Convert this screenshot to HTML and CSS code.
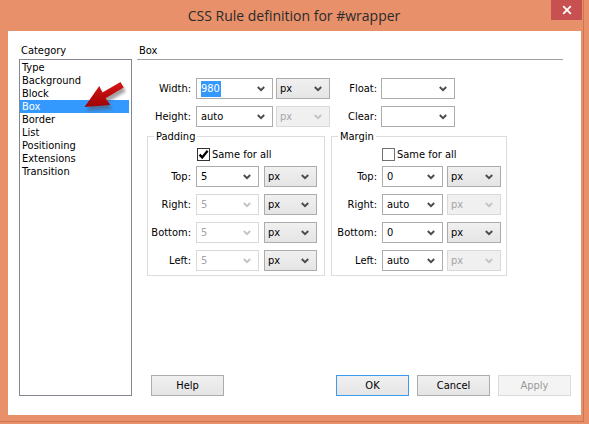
FILE: index.html
```html
<!DOCTYPE html>
<html>
<head>
<meta charset="utf-8">
<title>CSS Rule definition for #wrapper</title>
<link rel="stylesheet" href="styles.css">
</head>
<body>
<div class="window">
  <div class="titlebar">
    <div class="title">CSS Rule definition for #wrapper</div>
    <div class="close"><svg width="10" height="10" viewBox="0 0 10 10"><path d="M1.2 1.2L8.8 8.8M8.8 1.2L1.2 8.8" stroke="#fff" stroke-width="1.8"/></svg></div>
  </div>
  <div class="client">
    <div class="left">
      <div class="heading">Category</div>
      <ul class="catlist">
        <li>Type</li>
        <li>Background</li>
        <li>Block</li>
        <li class="sel">Box</li>
        <li>Border</li>
        <li>List</li>
        <li>Positioning</li>
        <li>Extensions</li>
        <li>Transition</li>
      </ul>
    </div>
    <div class="right">
      <div class="heading rule">Box</div>
      <div class="topgrid">
        <div class="row">
          <span class="lbl lbl-main">Width:</span>
          <div class="combo w77"><span class="val"><span class="hl">980</span></span><svg class="chev" viewBox="0 0 8 6"><path d="M0.8 1L4 4.2L7.2 1"/></svg></div>
          <div class="dd w54"><span class="val">px</span><svg class="chev" viewBox="0 0 8 6"><path d="M0.8 1L4 4.2L7.2 1"/></svg></div>
          <span class="lbl lbl-side">Float:</span>
          <div class="combo w74"><span class="val"></span><svg class="chev" viewBox="0 0 8 6"><path d="M0.8 1L4 4.2L7.2 1"/></svg></div>
        </div>
        <div class="row">
          <span class="lbl lbl-main">Height:</span>
          <div class="combo w77"><span class="val">auto</span><svg class="chev" viewBox="0 0 8 6"><path d="M0.8 1L4 4.2L7.2 1"/></svg></div>
          <div class="dd w54 off"><span class="val">px</span><svg class="chev" viewBox="0 0 8 6"><path d="M0.8 1L4 4.2L7.2 1"/></svg></div>
          <span class="lbl lbl-side">Clear:</span>
          <div class="combo w74"><span class="val"></span><svg class="chev" viewBox="0 0 8 6"><path d="M0.8 1L4 4.2L7.2 1"/></svg></div>
        </div>
      </div>
      <div class="groups">
        <fieldset class="grp pad">
          <legend>Padding</legend>
          <div class="chk"><span class="box on"><svg viewBox="0 0 11 11"><path d="M1.6 5.6L4.2 8.4L9.6 1.8"/></svg></span>Same for all</div>
          <div class="row"><span class="lbl">Top:</span><div class="combo cv"><span class="val">5</span><svg class="chev" viewBox="0 0 8 6"><path d="M0.8 1L4 4.2L7.2 1"/></svg></div><div class="dd cu"><span class="val">px</span><svg class="chev" viewBox="0 0 8 6"><path d="M0.8 1L4 4.2L7.2 1"/></svg></div></div>
          <div class="row"><span class="lbl">Right:</span><div class="combo cv off"><span class="val">5</span><svg class="chev" viewBox="0 0 8 6"><path d="M0.8 1L4 4.2L7.2 1"/></svg></div><div class="dd cu"><span class="val">px</span><svg class="chev" viewBox="0 0 8 6"><path d="M0.8 1L4 4.2L7.2 1"/></svg></div></div>
          <div class="row"><span class="lbl">Bottom:</span><div class="combo cv off"><span class="val">5</span><svg class="chev" viewBox="0 0 8 6"><path d="M0.8 1L4 4.2L7.2 1"/></svg></div><div class="dd cu"><span class="val">px</span><svg class="chev" viewBox="0 0 8 6"><path d="M0.8 1L4 4.2L7.2 1"/></svg></div></div>
          <div class="row"><span class="lbl">Left:</span><div class="combo cv off"><span class="val">5</span><svg class="chev" viewBox="0 0 8 6"><path d="M0.8 1L4 4.2L7.2 1"/></svg></div><div class="dd cu"><span class="val">px</span><svg class="chev" viewBox="0 0 8 6"><path d="M0.8 1L4 4.2L7.2 1"/></svg></div></div>
        </fieldset>
        <fieldset class="grp mar">
          <legend>Margin</legend>
          <div class="chk"><span class="box"></span>Same for all</div>
          <div class="row"><span class="lbl">Top:</span><div class="combo cv"><span class="val">0</span><svg class="chev" viewBox="0 0 8 6"><path d="M0.8 1L4 4.2L7.2 1"/></svg></div><div class="dd cu"><span class="val">px</span><svg class="chev" viewBox="0 0 8 6"><path d="M0.8 1L4 4.2L7.2 1"/></svg></div></div>
          <div class="row"><span class="lbl">Right:</span><div class="combo cv"><span class="val">auto</span><svg class="chev" viewBox="0 0 8 6"><path d="M0.8 1L4 4.2L7.2 1"/></svg></div><div class="dd cu off"><span class="val">px</span><svg class="chev" viewBox="0 0 8 6"><path d="M0.8 1L4 4.2L7.2 1"/></svg></div></div>
          <div class="row"><span class="lbl">Bottom:</span><div class="combo cv"><span class="val">0</span><svg class="chev" viewBox="0 0 8 6"><path d="M0.8 1L4 4.2L7.2 1"/></svg></div><div class="dd cu"><span class="val">px</span><svg class="chev" viewBox="0 0 8 6"><path d="M0.8 1L4 4.2L7.2 1"/></svg></div></div>
          <div class="row"><span class="lbl">Left:</span><div class="combo cv"><span class="val">auto</span><svg class="chev" viewBox="0 0 8 6"><path d="M0.8 1L4 4.2L7.2 1"/></svg></div><div class="dd cu off"><span class="val">px</span><svg class="chev" viewBox="0 0 8 6"><path d="M0.8 1L4 4.2L7.2 1"/></svg></div></div>
        </fieldset>
      </div>
      <div class="buttons">
        <button class="btn">Help</button>
        <div class="btn-group">
          <button class="btn default">OK</button>
          <button class="btn">Cancel</button>
          <button class="btn disabled">Apply</button>
        </div>
      </div>
    </div>
    <svg class="pointer" viewBox="74 76 60 44" width="60" height="44">
      <defs>
        <linearGradient id="ag" x1="0" y1="0" x2="0" y2="1">
          <stop offset="0" stop-color="#d81616"/>
          <stop offset="1" stop-color="#a00202"/>
        </linearGradient>
        <filter id="blur" x="-20%" y="-20%" width="140%" height="140%"><feGaussianBlur stdDeviation="1.6"/></filter>
      </defs>
      <path d="M84.5 107L99.3 85.9L102.4 92.6L120.5 82L123.7 87.6L105.6 98.2L110.3 104.9Z" transform="translate(2 4)" fill="#555" opacity="0.55" filter="url(#blur)"/>
      <path d="M84.5 107L99.3 85.9L102.4 92.6L120.5 82L123.7 87.6L105.6 98.2L110.3 104.9Z" fill="url(#ag)"/>
    </svg>
  </div>
</div>
</body>
</html>
```

FILE: styles.css
```css
* { box-sizing: border-box; }

html, body {
  margin: 0;
  padding: 0;
  background: #e8906a;
}

body {
  width: 589px;
  height: 424px;
  overflow: hidden;
  font-family: "DejaVu Sans Condensed", "DejaVu Sans", sans-serif;
  font-stretch: condensed;
  font-size: 11px;
  color: #000;
}

.window {
  position: relative;
  width: 584px;
  height: 422px;
  background: #e8906a;
  border-right: 1px solid #cf7650;
  border-bottom: 1px solid #cf7650;
}

.titlebar {
  height: 31px;
  display: flex;
  justify-content: center;
  align-items: center;
  position: relative;
}

.title {
  font-family: "Open Sans", "Noto Sans", sans-serif;
  font-stretch: normal;
  font-size: 14px;
  color: #2a2a2a;
  margin-left: 5px;
  padding-bottom: 1px;
}

.close {
  position: absolute;
  top: 0;
  left: 551px;
  width: 31px;
  height: 20px;
  background: #c75050;
  display: flex;
  align-items: center;
  justify-content: center;
}

.client {
  position: relative;
  margin-left: 8px;
  width: 573px;
  height: 384px;
  background: #fff;
  display: flex;
  padding: 11px 0 19px 11px;
}

.heading {
  height: 17px;
  line-height: 15px;
  padding-top: 1px;
  padding-left: 2px;
}

.heading.rule {
  border-bottom: 1px solid #a0a0a0;
  margin-right: 8px;
  height: 18px;
}

.left {
  width: 113px;
  display: flex;
  flex-direction: column;
}

.catlist {
  list-style: none;
  margin: 0;
  padding: 1px 0 0 0;
  border: 1px solid #828790;
  flex: 1;
}

.catlist li {
  height: 13px;
  line-height: 14px;
  padding-left: 2px;
  margin-right: 2px;
  white-space: nowrap;
}

.catlist li.sel {
  background: #3399ff;
  color: #fff;
}

.right {
  margin-left: 5px;
  width: 434px;
  display: flex;
  flex-direction: column;
}

.topgrid {
  margin-top: 18px;
  display: flex;
  flex-direction: column;
  gap: 7px;
}

.row {
  display: flex;
  align-items: center;
  height: 21px;
}

.lbl {
  text-align: right;
  white-space: nowrap;
}

.lbl-main { width: 54px; margin-right: 5px; }
.lbl-side { width: 47px; margin-right: 4px; margin-left: 0; }

.combo, .dd {
  height: 21px;
  border: 1px solid #acacac;
  background: #fff;
  display: flex;
  align-items: center;
  justify-content: space-between;
  padding: 0 7px 0 4px;
  color: #000;
}

.dd {
  background: linear-gradient(#f0f0f0, #e5e5e5);
  padding-left: 3px;
}

.val {
  line-height: 13px;
  white-space: nowrap;
}

.hl {
  background: #3399ff;
  color: #fff;
  padding: 1px 1px 2px 0;
}

.chev {
  width: 8px;
  height: 6px;
  fill: none;
  stroke: #4a4a4a;
  stroke-width: 1.9;
  flex: none;
}

.combo.off, .dd.off {
  border-color: #d9d9d9;
  color: #a6a6a6;
}

.dd.off {
  background: #f0f0f0;
}

.off .chev { stroke: #c4c4c4; }

.w77 { width: 77px; margin-right: 3px; }
.w54 { width: 54px; }
.w74 { width: 74px; }

.groups {
  display: flex;
  gap: 6px;
  margin-top: 3px;
  margin-left: 10px;
}

.grp {
  margin: 0;
  padding: 0 0 4px 0;
  border: 1px solid #dcdcdc;
  min-width: 0;
}

.grp legend {
  margin-left: 6px;
  padding: 0 2px;
  line-height: 13px;
}

.grp.pad { width: 178px; }
.grp.mar { width: 176px; }

.grp .row { margin-top: 7px; }
.grp .chk + .row { margin-top: 5px; }

.pad .lbl { width: 43px; margin-right: 5px; }
.pad .cv { width: 63px; margin-right: 5px; }
.pad .cu { width: 53px; }

.mar .lbl { width: 45px; margin-right: 5px; }
.mar .cv { width: 61px; margin-right: 4px; }
.mar .cu { width: 54px; }

.chk {
  display: flex;
  align-items: center;
  height: 13px;
  margin-top: 5px;
  line-height: 13px;
}

.pad .chk { padding-left: 49px; }
.mar .chk { padding-left: 50px; }

.box {
  width: 13px;
  height: 13px;
  border: 1px solid #707070;
  background: #fff;
  margin-right: 2px;
  display: flex;
  align-items: center;
  justify-content: center;
}

.box.on { border-color: #333; }

.box svg {
  width: 11px;
  height: 11px;
  fill: none;
  stroke: #000;
  stroke-width: 2.3;
}

.buttons {
  margin-top: auto;
  display: flex;
  justify-content: space-between;
  padding-left: 14px;
}

.btn-group {
  display: flex;
  gap: 8px;
}

.btn {
  width: 73px;
  height: 21px;
  margin: 0;
  padding: 0;
  font: inherit;
  color: #000;
  border: 1px solid #acacac;
  background: linear-gradient(#f0f0f0, #e5e5e5);
  line-height: 17px;
}

.btn.default {
  border-color: #3c9af0;
}

.btn.disabled {
  border-color: #dadada;
  background: #f4f4f4;
  color: #9a9a9a;
}

.pointer {
  position: absolute;
  left: 66px;
  top: 45px;
}
```
